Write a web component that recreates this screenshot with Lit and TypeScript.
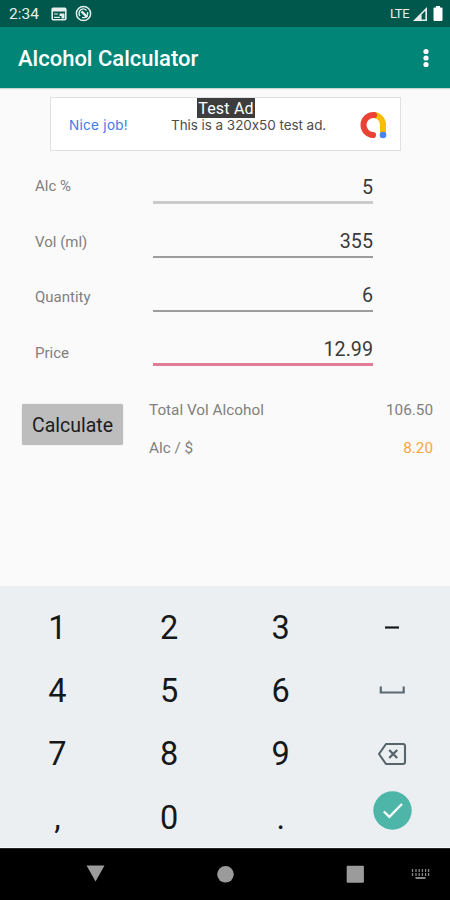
import { LitElement, html, css, svg } from "lit";
import { customElement } from "lit/decorators.js";

interface Field {
  label: string;
  value: string;
  state: string;
}

const FIELDS: Field[] = [
  { label: "Alc %", value: "5", state: "thick" },
  { label: "Vol (ml)", value: "355", state: "" },
  { label: "Quantity", value: "6", state: "" },
  { label: "Price", value: "12.99", state: "focused" },
];

@customElement("status-bar")
class StatusBar extends LitElement {
  static styles = css`
    :host {
      display: flex;
      align-items: center;
      height: 27px;
      padding: 0 7px 0 9px;
      box-sizing: border-box;
      background: #00574b;
      color: #e6efee;
    }
    .time { font-size: 15.5px; line-height: 27px; width: 42px; padding-top: 2px; }
    .lte { font-size: 13px; letter-spacing: -0.4px; margin-left: auto; width: 23px; }
    svg { display: block; }
    .news { margin-right: 8px; }
    .battery { margin-left: 6px; }
  `;
  render() {
    return html`
      <span class="time">2:34</span>
      <svg class="news" width="16" height="14" viewBox="0 0 16 14">
        <rect x="1.2" y="1.4" width="13.6" height="11.4" rx="1" fill="none" stroke="#e6efee" stroke-width="1.6" />
        <path d="M1 2h14v2.6H1zM8.5 6.5h5v5h-3v-2.5h-2zM3 6.5h4v1H3zM3 9.8h6v1.2H3z" fill="#e6efee" />
      </svg>
      <svg width="17" height="17" viewBox="0 0 17 17" fill="none" stroke="#e6efee">
        <circle cx="8.5" cy="8.5" r="7.1" stroke-width="1.5" />
        <path d="M5 11a4.4 4.4 0 0 1 1-6.4q3-1.8 5.5.9M12.5 7q.7 3-1.500 4.8-2 1.3-4 .5" stroke-width="1.4" />
        <path d="M6.5 6.3l5.8 5.8" stroke-width="2.4" />
      </svg>
      <span class="lte">LTE</span>
      <svg width="14" height="14" viewBox="0 0 14 14">
        <path d="M0 14L14 0v14z" fill="#e6efee" />
        <path d="M8.6 7.4L12.4 3.8v8.6H8.6z" fill="#00574b" />
      </svg>
      <svg class="battery" width="10" height="15" viewBox="0 0 10 15">
        <path d="M3 0h4v1.6h1.5q1 0 1 1V14q0 1-1 1h-7q-1 0-1-1V2.6q0-1 1-1H3z" fill="#fff" />
      </svg>
    `;
  }
}

@customElement("ad-banner")
class AdBanner extends LitElement {
  static styles = css`
    :host {
      display: flex;
      position: relative;
      align-items: center;
      box-sizing: border-box;
      width: 351px;
      height: 54px;
      margin: 9px 0 0 50px;
      padding: 1px 13px 0 18px;
      border: 1px solid #dfe0e1;
      background: #fff;
      font-family: Inter, Roboto, sans-serif;
      font-size: 13.5px;
      color: #4c4d4f;
    }
    .praise { color: #3f7ae6; width: 102px; letter-spacing: 0.3px; padding-top: 1px; }
    .copy { letter-spacing: -0.06px; white-space: nowrap; padding-top: 1px; }
    .logo { display: block; margin-left: auto; }
    .tag {
      position: absolute;
      left: 146px;
      top: 0;
      width: 58px;
      height: 20px;
      box-sizing: border-box;
      text-align: center;
      line-height: 21px;
      font-family: Roboto, sans-serif;
      font-size: 16px;
      letter-spacing: 0.2px;
      color: #fff;
      background: #3d3d3d;
    }
  `;
  render() {
    return html`
      <span class="praise">Nice job!</span>
      <span class="copy">This is a 320x50 test ad.</span>
      <svg class="logo" width="28" height="28" viewBox="0 0 28 28" fill="none" stroke-linecap="round" stroke-width="6">
        <path d="M14.5 4A9.8 9.8 0 0 1 24 14v8.5" stroke="#fbbc04" stroke-linecap="butt" />
        <path d="M15 4A10 10 0 0 0 14 24" stroke="#ea4335" stroke-linecap="round" />
        <circle cx="24" cy="24" r="3.3" fill="#4285f4" />
      </svg>
      <span class="tag">Test Ad</span>
    `;
  }
}

@customElement("number-pad")
class NumberPad extends LitElement {
  static styles = css`
    :host {
      display: grid;
      grid-template-columns: repeat(4, 111.7px);
      grid-template-rows: repeat(4, 63.4px);
      box-sizing: border-box;
      height: 262px;
      padding: 10px 0 0 1.5px;
      background: #eceff1;
      border-bottom: 1px solid #f8f9fa;
      color: #15181a;
      overflow: hidden;
    }
    .key {
      display: flex;
      align-items: center;
      justify-content: center;
      font-size: 32.5px;
      line-height: 64px;
    }
    .key svg { display: block; }
    .done { align-items: flex-start; padding-top: 5px; }
  `;
  private icon(name: string) {
    switch (name) {
      case "minus":
        return html`<svg width="28" height="28" viewBox="0 0 28 28">${svg`<path d="M7 13.5h14" stroke="#15181a" stroke-width="2.2" />`}</svg>`;
      case "space":
        return html`<svg width="28" height="28" viewBox="0 0 28 28">${svg`<path d="M2.8 9.5v6h22.9V9.5" fill="none" stroke="#5b6a72" stroke-width="2.2" />`}</svg>`;
      case "erase":
        return html`<svg width="30" height="24" viewBox="0 0 30 24">${svg`
          <path d="M9 2H26q2 0 2 2V20q0 2-2 2H9L2 12z" fill="none" stroke="#56646b" stroke-width="2.1" stroke-linejoin="round" />
          <path d="M12.2 8l8 8M20.2 8l-8 8" stroke="#56646b" stroke-width="2.3" />`}</svg>`;
      case "done":
        return html`<svg width="39" height="39" viewBox="0 0 39 39">${svg`
          <circle cx="19.5" cy="19.5" r="19.2" fill="#4db6a9" />
          <path d="M10.8 20.5l5.6 5.4L29 13" fill="none" stroke="#fff" stroke-width="2.3" />`}</svg>`;
      default:
        return name;
    }
  }
  render() {
    const keys = ["1", "2", "3", "minus", "4", "5", "6", "space", "7", "8", "9", "erase", ",", "0", ".", "done"];
    return keys.map((k) => html`<div class="key ${k === "done" ? "done" : ""}">${this.icon(k)}</div>`);
  }
}

@customElement("nav-bar")
class NavBar extends LitElement {
  static styles = css`
    :host { display: block; height: 52px; background: #000; }
    svg { display: block; }
  `;
  render() {
    return html`
      <svg width="450" height="52" viewBox="0 0 450 52" fill="#9b9b9b">
        <path d="M0 0h450v1H0z" fill="#222426" />
        <path d="M86.5 17.5h18L95.5 33.5z" />
        <circle cx="225.5" cy="26.3" r="8.3" />
        <rect x="346.7" y="17.8" width="17.2" height="17" rx="1" />
        <path d="M412.5 21v7M416 21v7M419.2 21v7M422.4 21v7M425.6 21v7M428.6 21v7" stroke="#858585" stroke-width="1.3" stroke-dasharray="3 1" />
        <path d="M415.5 29h10v2h-10z" fill="#858585" />
      </svg>
    `;
  }
}

@customElement("app-root")
class AppRoot extends LitElement {
  static styles = css`
    :host {
      display: flex;
      flex-direction: column;
      width: 450px;
      height: 900px;
      overflow: hidden;
      background: #fafafa;
      font-family: Roboto, sans-serif;
    }
    .toolbar {
      display: flex;
      align-items: center;
      justify-content: space-between;
      height: 59px;
      padding: 2px 20px 0 18px;
      background: #008577;
      color: #fff;
      box-shadow: 0 1px 1px #c8d3d2;
    }
    .title { font-size: 22px; font-weight: 500; }
    .more { display: block; }
    main { flex: 1; min-height: 0; }
    .form { display: flex; padding: 18px 77px 0 35px; }
    .labels { width: 118px; }
    .label { height: 55.5px; line-height: 34px; font-size: 15px; color: #808080; }
    .fields { flex: 1; }
    .field {
      box-sizing: border-box;
      height: 54px;
      display: flex;
      flex-direction: column;
      text-align: right;
      font-size: 19.7px;
      color: #3a3a3a;
    }
    .value { height: 32px; line-height: 38px; }
    .line { height: 1.5px; background: #9c9c9c; margin-top: 1px; }
    .thick .line { height: 3px; background: #cacaca; margin-top: 0; }
    .focused .line { height: 3px; background: #e07b9a; margin-top: 0; }
    .result { display: flex; padding: 9px 17px 0 22px; }
    .button {
      width: 101px;
      height: 41px;
      margin: 4px 26px 0 0;
      border: 0;
      padding: 1px 0 0;
      border-radius: 2px;
      background: #bdbdbd;
      box-shadow: 0 0 1px #aaa;
      font-family: Roboto, sans-serif;
      font-size: 19.5px;
      color: #1c1c1c;
    }
    .totals { flex: 1; }
    .total {
      display: flex;
      justify-content: space-between;
      height: 38px;
      line-height: 21px;
      font-size: 15.3px;
      color: #808080;
    }
    .accent { color: #f9a63a; }
  `;
  render() {
    return html`
      <status-bar></status-bar>
      <header class="toolbar">
        <span class="title">Alcohol Calculator</span>
        <svg class="more" width="8" height="22" viewBox="0 0 8 22" fill="#fff">
          <circle cx="4" cy="3.5" r="2.6" /><circle cx="4" cy="10" r="2.6" /><circle cx="4" cy="16.5" r="2.6" />
        </svg>
      </header>
      <main>
        <ad-banner></ad-banner>
        <section class="form">
          <div class="labels">${FIELDS.map((f) => html`<div class="label">${f.label}</div>`)}</div>
          <div class="fields">
            ${FIELDS.map(
              (f) => html`<div class="field ${f.state}"><div class="value">${f.value}</div><div class="line"></div></div>`
            )}
          </div>
        </section>
        <section class="result">
          <button class="button">Calculate</button>
          <div class="totals">
            <div class="total"><span>Total Vol Alcohol</span><span>106.50</span></div>
            <div class="total"><span>Alc / $</span><span class="accent">8.20</span></div>
          </div>
        </section>
      </main>
      <number-pad></number-pad>
      <nav-bar></nav-bar>
    `;
  }
}
